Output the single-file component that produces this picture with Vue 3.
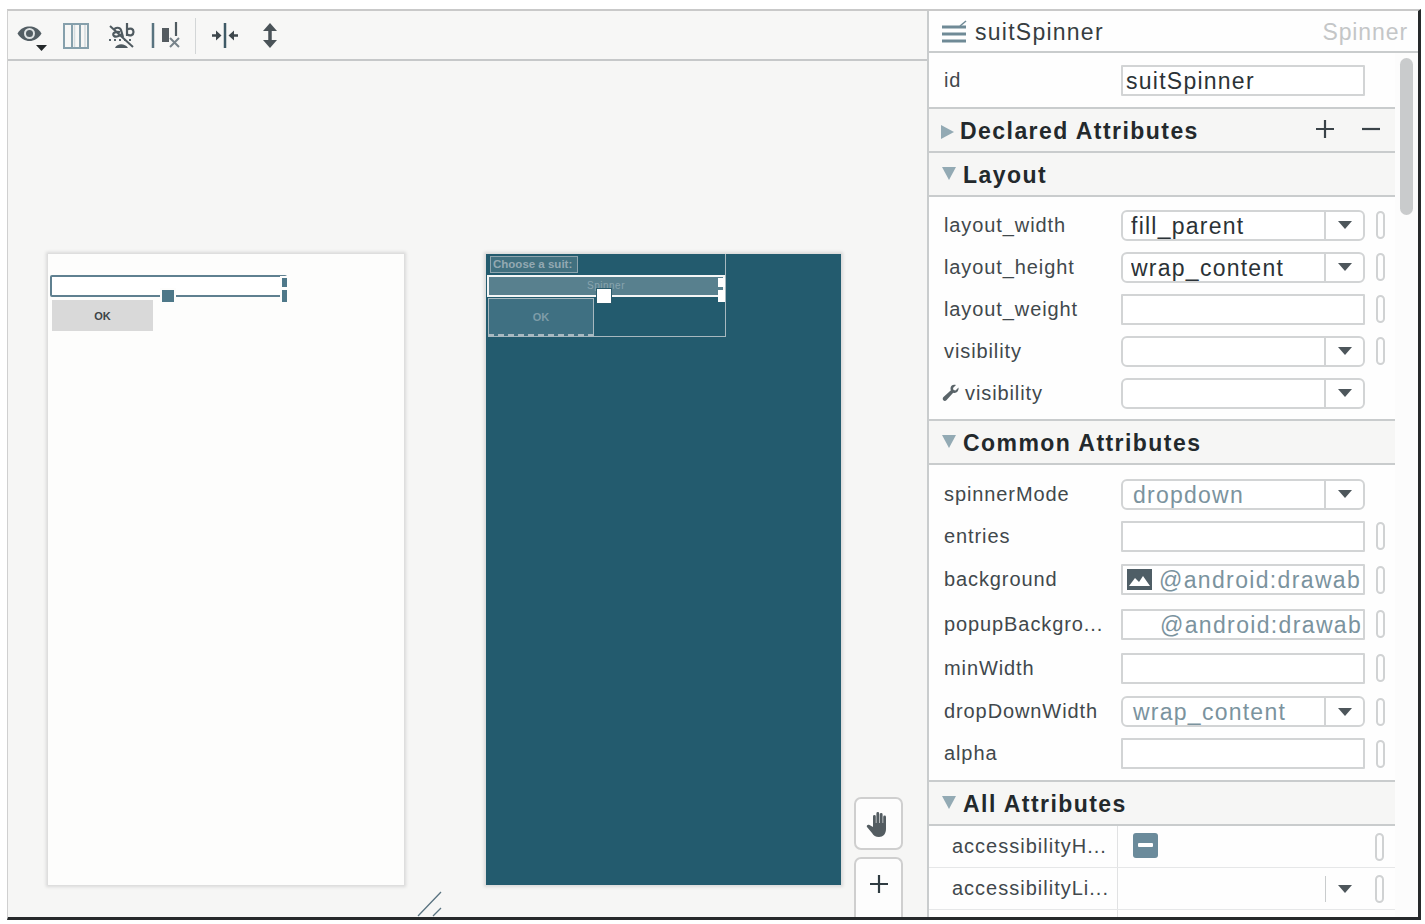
<script setup>
const layoutRows = [
  { label: 'layout_width', value: 'fill_parent', kind: 'select', strong: true, pin: true },
  { label: 'layout_height', value: 'wrap_content', kind: 'select', strong: true, pin: true },
  { label: 'layout_weight', value: '', kind: 'text', pin: true },
  { label: 'visibility', value: '', kind: 'select', pin: true },
  { label: 'visibility', value: '', kind: 'select', wrench: true, pin: false },
]
const commonRows = [
  { label: 'spinnerMode', value: 'dropdown', kind: 'select', h: 42 },
  { label: 'entries', value: '', kind: 'text', pin: true, h: 42 },
  { label: 'background', value: '@android:drawab', kind: 'text', pin: true, image: true, h: 45 },
  { label: 'popupBackgro...', value: '@android:drawab', kind: 'text', pin: true, indent: true, h: 44 },
  { label: 'minWidth', value: '', kind: 'text', pin: true, h: 44 },
  { label: 'dropDownWidth', value: 'wrap_content', kind: 'select', pin: true, h: 43 },
  { label: 'alpha', value: '', kind: 'text', pin: true, h: 41 },
]
</script>

<template>
  <div class="page">
    <div class="frame">
      <section class="designer">
        <div class="toolbar">
          <svg class="ti" width="32" height="32" viewBox="0 0 32 32">
            <path d="M2.500 13.500C6 8 10 6.500 14.500 6.500S23 8 26.500 13.500C23 19 19 21 14.500 21S6 19 2.500 13.500z" fill="#535e64" />
            <circle cx="14.500" cy="13.500" r="5.500" fill="#dfe3e4" />
            <circle cx="14.500" cy="13.500" r="3.500" fill="#535e64" />
            <path d="M21 25h11l-5.500 6z" fill="#24282a" />
          </svg>
          <svg class="ti" width="32" height="32" viewBox="0 0 32 32">
            <rect x="4" y="4" width="24" height="24" fill="none" stroke="#86a0ac" stroke-width="2" />
            <path d="M12 4v24M20 4v24" stroke="#86a0ac" stroke-width="2" />
            <path d="M14.500 5v22M25 5v22" stroke="#d4dcdf" stroke-width="1.500" />
          </svg>
          <svg class="ti" width="32" height="32" viewBox="0 0 32 32">
            <path d="M22 3v13M22 9.500c4-2 6.500-.5 6.500 2.500s-3 4.500-6.500 2.500" fill="none" stroke="#4f5a60" stroke-width="2.200" />
            <path d="M9 10c1-3 6-3 7 0l2 7M15 12c-6-1-8 2-6 4 2 1.500 6 0 7-2" fill="none" stroke="#4f5a60" stroke-width="2.200" />
            <path d="M4 20h25" stroke="#59666c" stroke-width="2" stroke-dasharray="2 3" />
            <path d="M10 28c2-5 10-5 13 0z" fill="#4f5a60" />
            <path d="M5 6l23 21" stroke="#4f5a60" stroke-width="2" />
          </svg>
          <svg class="ti" width="32" height="32" viewBox="0 0 32 32">
            <path d="M3 3v25" stroke="#58737f" stroke-width="2.500" />
            <rect x="12" y="8" width="7" height="14" fill="#545b60" />
            <path d="M26 2v14" stroke="#4f5a60" stroke-width="2.200" />
            <path d="M20 18l9 9M29 18l-9 9" stroke="#77838a" stroke-width="2" />
          </svg>
          <span class="tool-sep"></span>
          <svg class="ti" width="32" height="32" viewBox="0 0 32 32">
            <path d="M16 3v25" stroke="#3f5a66" stroke-width="2.500" />
            <path d="M3 15.500h4M25 15.500h4" stroke="#3e474c" stroke-width="2.500" />
            <path d="M7 10.500v10l5.500-5zM25 10.500v10l-5.500-5z" fill="#3e474c" />
          </svg>
          <svg class="ti" width="32" height="32" viewBox="0 0 32 32">
            <path d="M16 7v18" stroke="#4a5358" stroke-width="3.500" />
            <path d="M9 11l7-8 7 8zM9 20l7 8 7-8z" fill="#4a5358" />
          </svg>
        </div>

        <div class="canvas">
          <div class="phones">
            <div class="phone phone-light">
              <div class="selection light-sel">
                <i class="handle mid"></i>
                <i class="handle side-top"></i>
                <i class="handle side-bottom"></i>
              </div>
              <div class="ok-light">OK</div>
            </div>

            <div class="phone phone-dark">
              <div class="blueprint">
                <div class="bp-head"><span class="bp-label">Choose a suit:</span></div>
                <div class="selection dark-sel">
                  <span class="spin-text">Spinner</span>
                  <i class="handle mid"></i>
                  <i class="handle side-top"></i>
                  <i class="handle side-bottom"></i>
                </div>
                <div class="bp-ok"><span>OK</span></div>
              </div>
            </div>
          </div>

          <div class="zoom-tools">
            <button class="zoom-btn hand">
              <svg width="26" height="28" viewBox="0 0 26 28">
                <path d="M7 17V6.500a1.400 1.400 0 0 1 2.800 0V13h.6V3.500a1.400 1.400 0 0 1 2.800 0V13h.6V4.500a1.400 1.400 0 0 1 2.800 0V13h.6V7a1.400 1.400 0 0 1 2.800 0v12c0 5-3 8-7 8-3.500 0-5.500-1.500-7-4l-5-6c-1-1.500 1-3 2.500-2z" fill="#535c61" />
              </svg>
            </button>
            <button class="zoom-btn plus">
              <svg width="20" height="20" viewBox="0 0 20 20">
                <path d="M10 1v18M1 10h18" stroke="#2f3b41" stroke-width="2.200" />
              </svg>
            </button>
          </div>

          <svg class="corner" width="30" height="26" viewBox="0 0 30 26">
            <path d="M2 25L25 1M17 25l8-8" stroke="#5a7380" stroke-width="1.300" fill="none" />
          </svg>
        </div>
      </section>

      <aside class="panel">
        <header class="panel-head">
          <svg width="26" height="24" viewBox="0 0 26 24" class="head-icon">
            <path d="M1 8h24M1 15h24M1 22h24" stroke="#6f8a96" stroke-width="3" />
            <path d="M19 7l6-5" stroke="#6f8a96" stroke-width="1.500" />
          </svg>
          <span class="head-title">suitSpinner</span>
          <span class="head-kind">Spinner</span>
        </header>

        <div class="panel-body">
          <div class="attrs">
            <div class="id-row">
              <span class="label">id</span>
              <div class="field text-field"><span class="value strong">suitSpinner</span></div>
            </div>

            <div class="section declared">
              <span class="tri right"></span>
              <span>Declared Attributes</span>
              <span class="section-actions">
                <svg width="20" height="20" viewBox="0 0 20 20"><path d="M10 1v18M1 10h18" stroke="#3a4348" stroke-width="2.200" /></svg>
                <svg width="20" height="20" viewBox="0 0 20 20"><path d="M1 10h18" stroke="#3a4348" stroke-width="2.200" /></svg>
              </span>
            </div>

            <div class="section"><span class="tri"></span><span>Layout</span></div>
            <div class="group layout-group">
              <div v-for="(r, i) in layoutRows" :key="i" class="row">
                <span class="label" :class="{ wrench: r.wrench }">
                  <svg v-if="r.wrench" width="18" height="18" viewBox="0 0 18 18">
                    <path d="M16.500 3.500l-3 3-2-.5-.5-2 3-3C11 0 8.500 1.500 8.500 4.500c0 .8.100 1.300.4 1.800L1.500 13c-1 1-1 2.300-.2 3.200.9.900 2.200.9 3.100 0l6.800-7.500c3 1 5.800-1.500 5.300-5.200z" fill="#5a6469" />
                  </svg>
                  {{ r.label }}
                </span>
                <div class="field" :class="r.kind === 'select' ? 'select-field' : 'text-field'">
                  <span class="value" :class="{ strong: r.strong }">{{ r.value }}</span>
                  <span v-if="r.kind === 'select'" class="arrow"><i></i></span>
                </div>
                <span v-if="r.pin" class="pin"></span>
              </div>
            </div>

            <div class="section"><span class="tri"></span><span>Common Attributes</span></div>
            <div class="group common-group">
              <div
                v-for="r in commonRows"
                :key="r.label"
                class="row"
                :style="{ height: r.h + 'px' }"
              >
                <span class="label">{{ r.label }}</span>
                <div class="field" :class="r.kind === 'select' ? 'select-field' : 'text-field'">
                  <svg v-if="r.image" class="img-icon" width="25" height="21" viewBox="0 0 25 21">
                    <rect width="25" height="21" fill="#4f5e66" />
                    <path d="M2 17l6-8 4 4 4-6 7 10z" fill="#fff" />
                  </svg>
                  <span class="value muted" :class="{ indented: r.indent, gap: r.image, 'muted-select': r.kind === 'select' }">{{ r.value }}</span>
                  <span v-if="r.kind === 'select'" class="arrow"><i></i></span>
                </div>
                <span v-if="r.pin" class="pin"></span>
              </div>
            </div>

            <div class="section"><span class="tri"></span><span>All Attributes</span></div>
            <div class="all-row">
              <span class="all-label">accessibilityH...</span>
              <span class="all-value">
                <span class="minus-box"><i></i></span>
              </span>
              <span class="pin"></span>
            </div>
            <div class="all-row">
              <span class="all-label">accessibilityLi...</span>
              <span class="all-value">
                <span class="bare-arrow"><i></i></span>
              </span>
              <span class="pin"></span>
            </div>
            <div class="all-row tail">
              <span class="all-label"></span>
            </div>
          </div>
          <div class="scroll"><div class="thumb"></div></div>
        </div>
      </aside>
    </div>
  </div>
</template>

<style>
html, body { margin: 0; background: #fff; }
</style>

<style scoped>
* { box-sizing: border-box; }
.page {
  width: 1425px;
  height: 924px;
  padding: 9px 4px 4px 7px;
  background: #fff;
  overflow: hidden;
  font-family: "Liberation Sans", Arial, sans-serif;
}
.frame {
  display: flex;
  height: 100%;
  border-top: 2px solid #c9c9c9;
  border-right: 3px solid #26292b;
  border-bottom: 3px solid #26292b;
  border-left: 1px solid #d0d0d0;
}
.designer {
  width: 921px;
  flex: none;
  display: flex;
  flex-direction: column;
  background: #f6f6f5;
  border-right: 2px solid #c9cccd;
}
.toolbar {
  height: 50px;
  flex: none;
  display: flex;
  align-items: center;
  padding: 2px 0 0 7px;
  gap: 13px;
  border-bottom: 2px solid #c6c8c9;
  background: #f7f7f6;
}
.ti { flex: none; }
.tool-sep { width: 1px; height: 36px; background: #d3d6d7; }

.canvas {
  position: relative;
  flex: 1;
  min-height: 0;
  overflow: hidden;
}
.phones {
  display: flex;
  gap: 82px;
  padding: 193px 0 0 40px;
}
.phone {
  height: 631px;
  flex: none;
  position: relative;
  box-shadow: 0 0 3px 2px #d9d9d9;
}
.phone-light { width: 356px; background: #fdfdfc; }
.phone-dark { width: 355px; background: #235b6e; }

.selection { position: absolute; left: 2px; top: 21px; width: 237px; height: 22px; }
.light-sel { border: 2px solid #5f8090; border-radius: 2px; background: #fff; }
.dark-sel {
  left: -1px;
  top: 21px;
  width: 238px;
  border: 2px solid #f4f6f6;
  background: #58808e;
  text-align: center;
  color: #88a4af;
  font-size: 10px;
  line-height: 18px;
}
.spin-text { letter-spacing: .5px; }
.handle { position: absolute; display: block; }
.light-sel .handle { background: #4e7889; box-shadow: 0 0 0 2px #fdfdfc; }
.dark-sel .handle { background: #fff; }
.light-sel .handle.mid { left: 110px; top: 13px; width: 12px; height: 12px; }
.dark-sel .handle.mid { left: 108px; top: 12px; width: 14px; height: 14px; box-shadow: 0 0 0 1px #2a5a6b; }
.handle.side-top { width: 5px; height: 9px; right: -2px; top: 1px; }
.handle.side-bottom { width: 5px; height: 12px; right: -2px; top: 13px; }
.dark-sel .handle.side-top, .dark-sel .handle.side-bottom { width: 7px; }

.ok-light {
  position: absolute;
  left: 4px;
  top: 46px;
  width: 101px;
  height: 31px;
  background: #d9d9d9;
  color: #3d4448;
  font-size: 11px;
  font-weight: 700;
  display: flex;
  align-items: center;
  justify-content: center;
}

.blueprint {
  position: absolute;
  left: 2px;
  top: 0;
  width: 238px;
  height: 83px;
  border-right: 1px solid #a7b8bf;
  border-bottom: 1px solid #a7b8bf;
  display: flex;
  flex-direction: column;
}
.bp-head { height: 20px; flex: none; padding: 2px 0 0 2px; }
.bp-label {
  display: block;
  width: 88px;
  height: 17px;
  background: #41707f;
  border: 1px solid #8fa5ae;
  color: #93a9b2;
  font-size: 11.500px;
  font-weight: 700;
  line-height: 15px;
  padding-left: 2px;
  white-space: nowrap;
  overflow: hidden;
}
.bp-ok {
  margin-top: 24px;
  width: 106px;
  flex: 1;
  background: #3f7082;
  border: 1px solid #a7b8bf;
  border-bottom: 2px dashed #a9b9c0;
  color: #7e9ca8;
  font-size: 11px;
  font-weight: 700;
  display: flex;
  align-items: center;
  justify-content: center;
}

.zoom-tools {
  position: absolute;
  left: 846px;
  top: 736px;
  display: flex;
  flex-direction: column;
  gap: 7px;
}
.zoom-btn {
  width: 49px;
  padding: 0;
  background: #fdfdfd;
  border: 2px solid #cfcfcf;
  border-radius: 7px;
  display: flex;
  align-items: center;
  justify-content: center;
}
.hand { height: 53px; }
.plus { height: 70px; padding-bottom: 18px; border-bottom: 0; border-radius: 7px 7px 0 0; }
.corner { position: absolute; left: 408px; bottom: 0; }

.panel { flex: 1; min-width: 0; display: flex; flex-direction: column; background: #fefefe; }
.panel-head {
  height: 42px;
  flex: none;
  display: flex;
  align-items: center;
  padding: 3px 10px 0 12px;
  border-bottom: 2px solid #c9cccd;
}
.head-icon { flex: none; margin-top: -3px; }
.head-title { margin-left: 8px; font-size: 23px; letter-spacing: 1.25px; color: #363d41; }
.head-kind { margin-left: auto; font-size: 23px; letter-spacing: .9px; color: #c4c6c7; }
.panel-body { flex: 1; min-height: 0; display: flex; overflow: hidden; }
.attrs { width: 466px; flex: none; overflow: hidden; }
.scroll { flex: 1; background: #fcfcfc; padding: 5px 5px 0 5px; }
.thumb { height: 157px; border-radius: 7px; background: #c9cbcc; }

.id-row {
  height: 56px;
  display: flex;
  align-items: center;
  padding-left: 15px;
  border-bottom: 2px solid #c9cccd;
}

.label {
  flex: none;
  width: 177px;
  font-size: 20px;
  letter-spacing: .9px;
  color: #41484c;
  white-space: nowrap;
}
.label.wrench { display: inline-flex; align-items: center; gap: 5px; margin-left: -2px; width: 179px; }
.field {
  flex: none;
  width: 244px;
  height: 31px;
  display: flex;
  align-items: center;
  background: #fff;
  border: 2px solid #d2d4d5;
  font-size: 23px;
  letter-spacing: 1.25px;
  color: #2f373b;
  white-space: nowrap;
  overflow: hidden;
}
.text-field { border-radius: 1px; padding-left: 3px; }
.select-field { border-radius: 6px; padding-left: 8px; }
.value { flex: 1; min-width: 0; overflow: hidden; padding-top: 2px; }
.strong { color: #2b3236; }
.muted { color: #7b939e; letter-spacing: 1.35px; }
.muted-select { padding-left: 2px; letter-spacing: 1.25px; }
.indented { padding-left: 34px; }
.gap { padding-left: 7px; }
.img-icon { flex: none; margin-left: 1px; }
.arrow {
  flex: none;
  align-self: stretch;
  width: 39px;
  border-left: 2px solid #d2d4d5;
  display: flex;
  align-items: center;
  justify-content: center;
}
.arrow i, .bare-arrow i {
  width: 0;
  height: 0;
  border-left: 7px solid transparent;
  border-right: 7px solid transparent;
  border-top: 8px solid #4d565b;
}
.pin {
  flex: none;
  width: 9px;
  height: 28px;
  margin-left: 11px;
  border: 2px solid #d0d2d3;
  border-radius: 5px;
}

.section {
  height: 44px;
  display: flex;
  align-items: center;
  gap: 7px;
  padding: 3px 13px 0 13px;
  font-size: 23px;
  font-weight: 700;
  letter-spacing: 1.45px;
  color: #23292c;
  background: #f6f6f5;
  border-bottom: 2px solid #c9cccd;
}
.tri {
  width: 0;
  height: 0;
  border-left: 7.500px solid transparent;
  border-right: 7.500px solid transparent;
  border-top: 13px solid #93aab4;
  margin-top: -4px;
}
.tri.right {
  border-top: 7.500px solid transparent;
  border-bottom: 7.500px solid transparent;
  border-left: 13px solid #93aab4;
  border-right: 0;
  margin: 0;
}
.declared { gap: 6px; padding-left: 12px; }
.section-actions { margin-left: auto; display: flex; gap: 26px; margin-right: 1px; margin-top: -5px; }

.group { display: flex; flex-direction: column; border-bottom: 2px solid #c9cccd; }
.layout-group { padding: 7px 0 7px; height: 224px; }
.common-group { padding: 8px 0 6px; height: 317px; }
.row {
  height: 42px;
  flex: none;
  display: flex;
  align-items: center;
  padding-left: 15px;
}

.all-row {
  height: 42px;
  display: flex;
  align-items: center;
  border-bottom: 1px solid #e6e7e8;
}
.all-label {
  flex: none;
  width: 189px;
  height: 100%;
  padding: 0 0 0 23px;
  display: flex;
  align-items: center;
  font-size: 20px;
  letter-spacing: 1px;
  color: #41484c;
  white-space: nowrap;
  border-right: 1px solid #e1e2e3;
}
.all-value { flex: none; width: 257px; height: 100%; display: flex; align-items: center; }
.minus-box {
  width: 25px;
  height: 25px;
  margin: -3px 0 0 15px;
  border-radius: 3px;
  background: #6b8b9b;
  display: flex;
  align-items: center;
  justify-content: center;
}
.minus-box i { width: 15px; height: 4px; background: #fff; border-radius: 1px; }
.bare-arrow {
  margin-left: 207px;
  height: 26px;
  width: 39px;
  border-left: 1px solid #c9cccd;
  display: flex;
  align-items: center;
  justify-content: center;
}
.all-row .pin { margin-left: 0; }
.tail { height: 12px; border-bottom: 0; }
</style>
